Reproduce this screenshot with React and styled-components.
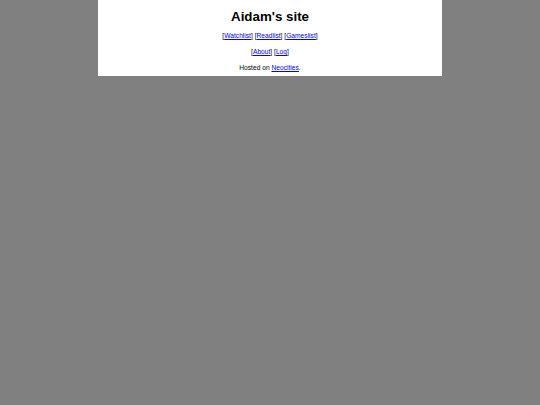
import React from "react";
import styled, { createGlobalStyle } from "styled-components";

const Global = createGlobalStyle`
  html, body {
    margin: 0;
    padding: 0;
    background: #808080;
  }
  body {
    font-family: "Liberation Sans", Arial, sans-serif;
  }
`;

const Page = styled.main`
  width: 344px;
  margin: 0 auto;
  padding-bottom: 4px;
  background: #ffffff;
  color: #000000;
  text-align: center;
  display: flow-root;
  font-size: 6.67px;
`;

const Title = styled.h1`
  font-size: 13.33px;
  line-height: 15.3px;
  font-weight: bold;
  margin: 8.9px 0 7.8px;
`;

const Lines = styled.div`
  display: flex;
  flex-direction: column;
  gap: 8px;
`;

const Line = styled.p`
  margin: 0;
  line-height: 8px;
`;

const Link = styled.a`
  color: #0000ee;
  text-decoration: underline;
`;

export default function App() {
  return (
    <>
      <Global />
      <Page>
        <Title>Aidam's site</Title>
        <Lines>
          <Line>
            [<Link href="#">Watchlist</Link>] [<Link href="#">Readlist</Link>] [
            <Link href="#">Gameslist</Link>]
          </Line>
          <Line>
            [<Link href="#">About</Link>] [<Link href="#">Log</Link>]
          </Line>
          <Line>
            Hosted on <Link href="#">Neocities</Link>.
          </Line>
        </Lines>
      </Page>
    </>
  );
}
